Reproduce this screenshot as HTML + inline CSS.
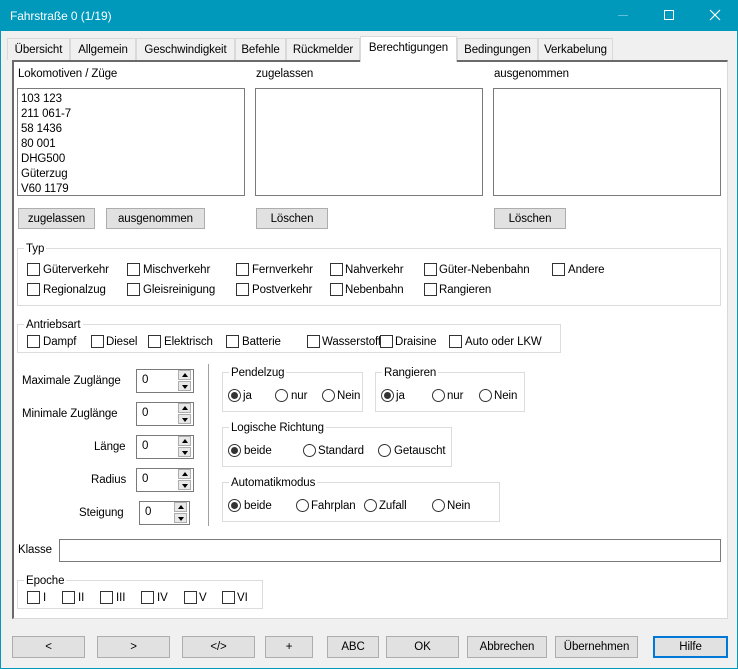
<!DOCTYPE html>
<html><head><meta charset="utf-8"><style>
*{box-sizing:border-box;margin:0;padding:0}
body{width:738px;height:669px;overflow:hidden;background:#f0f0f0;font-family:"Liberation Sans",sans-serif;font-size:11.5px;letter-spacing:-0.1px;color:#000;position:relative}
.a{position:absolute;white-space:nowrap}
span.a{padding-top:1px}
#win{position:absolute;left:0;top:0;width:738px;height:669px;border:1px solid #0099bc}
#title{position:absolute;left:0;top:0;width:738px;height:31px;background:#0099bc;color:#fff;font-size:12px}
.tab{position:absolute;top:38px;height:22px;border:1px solid #d9d9d9;border-bottom:none;background:#f0f0f0;padding:5px 0 0;text-align:center}
.tab.sel{top:36px;height:26px;background:#fff;border-color:#d9d9d9;z-index:2}
#panel{position:absolute;left:12px;top:60px;width:716px;height:559px;background:#fff;border:1px solid #d9d9d9;border-left:2px solid #6a6a6a;border-top:2px solid #6a6a6a}
.box{position:absolute;background:#fff;border:1px solid #7a7a7a}
.btn{position:absolute;background:#e1e1e1;border:1px solid #adadad;text-align:center;line-height:21px}
.grp{position:absolute;border:1px solid #dcdcdc}
.gl{position:absolute;top:-8px;left:6px;background:#fff;padding:1px 2px 0;line-height:14px}
.cb{position:absolute;width:13px;height:13px;border:1px solid #333;background:#fff}
.rb{position:absolute;width:13px;height:13px;border:1px solid #333;border-radius:50%;background:#fff}
.rb.on::after{content:"";position:absolute;left:2px;top:2px;width:7px;height:7px;border-radius:50%;background:#333}
.spin{position:absolute;width:13px;height:22px}
.spin div{width:13px;height:10px;background:#e8e8e8;border:1px solid #adadad;margin-bottom:1px;position:relative}
.up::after{content:"";position:absolute;left:3px;top:2px;border:3px solid transparent;border-bottom:4px solid #000;border-top:0}
.dn::after{content:"";position:absolute;left:3px;top:3px;border:3px solid transparent;border-top:4px solid #000;border-bottom:0}
</style></head><body>
<div id="title"><span class="a" style="left:10px;top:8px">Fahrstraße 0 (1/19)</span>
<div class="a" style="left:618px;top:15px;width:10px;height:1px;background:#5fbfd8"></div>
<div class="a" style="left:664px;top:10px;width:10px;height:10px;border:1px solid #fff"></div>
<svg class="a" style="left:709px;top:9px" width="12" height="12"><path d="M1 1L11 11M11 1L1 11" stroke="#fff" stroke-width="1.2"/></svg>
</div>
<div id="win"></div>
<div class="tab" style="left:7px;width:63px">Übersicht</div>
<div class="tab" style="left:70px;width:66px">Allgemein</div>
<div class="tab" style="left:136px;width:99px">Geschwindigkeit</div>
<div class="tab" style="left:235px;width:51px">Befehle</div>
<div class="tab" style="left:286px;width:74px">Rückmelder</div>
<div class="tab sel" style="left:360px;width:97px;padding-top:5px">Berechtigungen</div>
<div class="tab" style="left:457px;width:81px">Bedingungen</div>
<div class="tab" style="left:538px;width:75px">Verkabelung</div>
<div id="panel"></div>

<span class="a" style="left:18px;top:67px">Lokomotiven / Züge</span>
<span class="a" style="left:256px;top:67px">zugelassen</span>
<span class="a" style="left:494px;top:67px">ausgenommen</span>
<div class="box" style="left:17px;top:88px;width:228px;height:108px;padding:3px 0 0 3px;line-height:15px">103 123<br>211 061-7<br>58 1436<br>80 001<br>DHG500<br>Güterzug<br>V60 1179</div>
<div class="box" style="left:255px;top:88px;width:228px;height:108px"></div>
<div class="box" style="left:493px;top:88px;width:228px;height:108px"></div>
<div class="btn" style="left:18px;top:208px;width:77px;height:21px;line-height:20px">zugelassen</div>
<div class="btn" style="left:106px;top:208px;width:99px;height:21px;line-height:20px">ausgenommen</div>
<div class="btn" style="left:256px;top:208px;width:72px;height:21px;line-height:20px">Löschen</div>
<div class="btn" style="left:494px;top:208px;width:72px;height:21px;line-height:20px">Löschen</div>

<div class="grp" style="left:17px;top:248px;width:704px;height:58px"><span class="gl">Typ</span></div>
<div class="grp" style="left:17px;top:324px;width:544px;height:29px"><span class="gl">Antriebsart</span></div>
<div class="grp" style="left:17px;top:580px;width:246px;height:29px"><span class="gl">Epoche</span></div>

<div class="cb" style="left:27px;top:263px"></div><span class="a" style="left:43px;top:263px">Güterverkehr</span>
<div class="cb" style="left:127px;top:263px"></div><span class="a" style="left:143px;top:263px">Mischverkehr</span>
<div class="cb" style="left:236px;top:263px"></div><span class="a" style="left:252px;top:263px">Fernverkehr</span>
<div class="cb" style="left:330px;top:263px"></div><span class="a" style="left:345px;top:263px">Nahverkehr</span>
<div class="cb" style="left:424px;top:263px"></div><span class="a" style="left:439px;top:263px">Güter-Nebenbahn</span>
<div class="cb" style="left:552px;top:263px"></div><span class="a" style="left:568px;top:263px">Andere</span>
<div class="cb" style="left:27px;top:283px"></div><span class="a" style="left:43px;top:283px">Regionalzug</span>
<div class="cb" style="left:127px;top:283px"></div><span class="a" style="left:143px;top:283px">Gleisreinigung</span>
<div class="cb" style="left:236px;top:283px"></div><span class="a" style="left:252px;top:283px">Postverkehr</span>
<div class="cb" style="left:330px;top:283px"></div><span class="a" style="left:345px;top:283px">Nebenbahn</span>
<div class="cb" style="left:424px;top:283px"></div><span class="a" style="left:439px;top:283px">Rangieren</span>

<div class="cb" style="left:27px;top:335px"></div><span class="a" style="left:43px;top:335px">Dampf</span>
<div class="cb" style="left:91px;top:335px"></div><span class="a" style="left:106px;top:335px">Diesel</span>
<div class="cb" style="left:148px;top:335px"></div><span class="a" style="left:164px;top:335px">Elektrisch</span>
<div class="cb" style="left:226px;top:335px"></div><span class="a" style="left:242px;top:335px">Batterie</span>
<div class="cb" style="left:307px;top:335px"></div><span class="a" style="left:322px;top:335px">Wasserstoff</span>
<div class="cb" style="left:380px;top:335px"></div><span class="a" style="left:395px;top:335px">Draisine</span>
<div class="cb" style="left:449px;top:335px"></div><span class="a" style="left:465px;top:335px">Auto oder LKW</span>

<span class="a" style="left:22px;top:374px">Maximale Zuglänge</span>
<span class="a" style="left:22px;top:407px">Minimale Zuglänge</span>
<span class="a" style="left:94px;top:440px">Länge</span>
<span class="a" style="left:91px;top:473px">Radius</span>
<span class="a" style="left:79px;top:506px">Steigung</span>
<div class="box" style="left:136px;top:369px;width:58px;height:24px;padding:4px 5px">0</div><div class="spin" style="left:178px;top:370px"><div class="up"></div><div class="dn"></div></div>
<div class="box" style="left:136px;top:402px;width:58px;height:24px;padding:4px 5px">0</div><div class="spin" style="left:178px;top:403px"><div class="up"></div><div class="dn"></div></div>
<div class="box" style="left:136px;top:435px;width:58px;height:24px;padding:4px 5px">0</div><div class="spin" style="left:178px;top:436px"><div class="up"></div><div class="dn"></div></div>
<div class="box" style="left:136px;top:468px;width:58px;height:24px;padding:4px 5px">0</div><div class="spin" style="left:178px;top:469px"><div class="up"></div><div class="dn"></div></div>
<div class="box" style="left:139px;top:501px;width:51px;height:24px;padding:4px 5px">0</div><div class="spin" style="left:174px;top:502px"><div class="up"></div><div class="dn"></div></div>
<div class="a" style="left:208px;top:364px;width:1px;height:162px;background:#a0a0a0"></div>

<div class="grp" style="left:222px;top:372px;width:141px;height:40px"><span class="gl">Pendelzug</span></div>
<div class="rb on" style="left:228px;top:389px"></div><span class="a" style="left:243px;top:389px">ja</span>
<div class="rb" style="left:275px;top:389px"></div><span class="a" style="left:291px;top:389px">nur</span>
<div class="rb" style="left:322px;top:389px"></div><span class="a" style="left:337px;top:389px">Nein</span>
<div class="grp" style="left:375px;top:372px;width:150px;height:40px"><span class="gl">Rangieren</span></div>
<div class="rb on" style="left:381px;top:389px"></div><span class="a" style="left:396px;top:389px">ja</span>
<div class="rb" style="left:432px;top:389px"></div><span class="a" style="left:447px;top:389px">nur</span>
<div class="rb" style="left:479px;top:389px"></div><span class="a" style="left:494px;top:389px">Nein</span>
<div class="grp" style="left:222px;top:427px;width:230px;height:40px"><span class="gl">Logische Richtung</span></div>
<div class="rb on" style="left:228px;top:444px"></div><span class="a" style="left:244px;top:444px">beide</span>
<div class="rb" style="left:303px;top:444px"></div><span class="a" style="left:318px;top:444px">Standard</span>
<div class="rb" style="left:378px;top:444px"></div><span class="a" style="left:394px;top:444px">Getauscht</span>
<div class="grp" style="left:222px;top:482px;width:278px;height:40px"><span class="gl">Automatikmodus</span></div>
<div class="rb on" style="left:228px;top:499px"></div><span class="a" style="left:244px;top:499px">beide</span>
<div class="rb" style="left:296px;top:499px"></div><span class="a" style="left:311px;top:499px">Fahrplan</span>
<div class="rb" style="left:364px;top:499px"></div><span class="a" style="left:379px;top:499px">Zufall</span>
<div class="rb" style="left:432px;top:499px"></div><span class="a" style="left:447px;top:499px">Nein</span>

<span class="a" style="left:18px;top:543px">Klasse</span>
<div class="box" style="left:59px;top:539px;width:662px;height:23px"></div>

<div class="cb" style="left:27px;top:591px"></div><span class="a" style="left:43px;top:591px">I</span>
<div class="cb" style="left:62px;top:591px"></div><span class="a" style="left:78px;top:591px">II</span>
<div class="cb" style="left:100px;top:591px"></div><span class="a" style="left:116px;top:591px">III</span>
<div class="cb" style="left:141px;top:591px"></div><span class="a" style="left:157px;top:591px">IV</span>
<div class="cb" style="left:184px;top:591px"></div><span class="a" style="left:199px;top:591px">V</span>
<div class="cb" style="left:222px;top:591px"></div><span class="a" style="left:237px;top:591px">VI</span>

<div class="btn" style="left:12px;top:636px;width:73px;height:22px">&lt;</div>
<div class="btn" style="left:97px;top:636px;width:73px;height:22px">&gt;</div>
<div class="btn" style="left:182px;top:636px;width:73px;height:22px">&lt;/&gt;</div>
<div class="btn" style="left:265px;top:636px;width:48px;height:22px">+</div>
<div class="btn" style="left:327px;top:636px;width:52px;height:22px">ABC</div>
<div class="btn" style="left:386px;top:636px;width:73px;height:22px">OK</div>
<div class="btn" style="left:467px;top:636px;width:80px;height:22px">Abbrechen</div>
<div class="btn" style="left:555px;top:636px;width:83px;height:22px">Übernehmen</div>
<div class="btn" style="left:653px;top:636px;width:75px;height:22px;border:2px solid #0078d7;line-height:18px">Hilfe</div>
</body></html>
